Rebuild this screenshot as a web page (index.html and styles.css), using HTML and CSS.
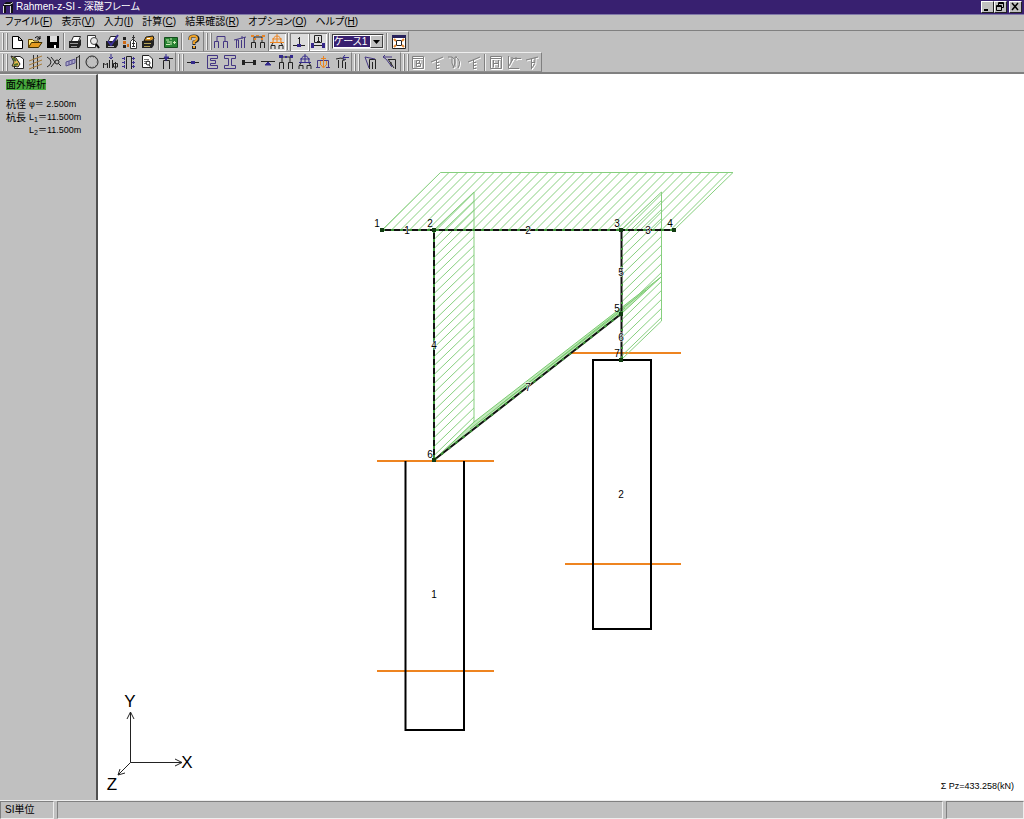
FILE: index.html
```html
<!DOCTYPE html>
<html lang="ja">
<head>
  <meta charset="UTF-8">
  <title>Rahmen-z-SI - 深礎フレーム</title>
  <link rel="stylesheet" href="styles.css">
</head>
<body>
  <header class="titlebar">
    <svg class="app-icon" viewBox="0 0 12 13"><path d="M1 4L4 1H11V12H8V5H4V12H1Z" fill="#111"/><path d="M1.500 5V12M8.500 5V12M2 3.500H8L11 1.500" fill="none" stroke="#ddd"/></svg>
    <h1>Rahmen-z-SI - 深礎フレーム</h1>
    <div class="window-buttons">
      <button aria-label="最小化"><svg viewBox="0 0 10 9"><path d="M2 7H6V9H2Z"/></svg></button>
      <button aria-label="元に戻す"><svg viewBox="0 0 10 9"><path d="M3.500 3V.5H8.500V5.500H6.500M3 1.500H9M1.500 3.500H6.500V8.500H1.500ZM1 4.500H7" fill="none" stroke="#000"/></svg></button>
      <button class="close" aria-label="閉じる"><svg viewBox="0 0 10 9"><path d="M2 1L8 8M8 1L2 8" stroke="#000" stroke-width="1.500"/></svg></button>
    </div>
  </header>

  <nav class="menubar">
    <button>ファイル(<u>F</u>)</button>
    <button>表示(<u>V</u>)</button>
    <button>入力(<u>I</u>)</button>
    <button>計算(<u>C</u>)</button>
    <button>結果確認(<u>R</u>)</button>
    <button>オプション(<u>O</u>)</button>
    <button>ヘルプ(<u>H</u>)</button>
  </nav>

  <div class="toolbars">
    <div class="toolbar-row">
      <div class="band">
        <span class="grip"></span>
        <div class="group g3">
          <button aria-label="新規"><svg viewBox="0 0 16 16"><path d="M3.500 2.500H9.500L13.500 6.500V14.500H3.500ZM9.500 2.500V6.500H13.500" fill="#fff" stroke="#000"/></svg></button>
          <button aria-label="開く"><svg viewBox="0 0 16 16"><path d="M1.500 13.500V5.500H5.500L7 7H11.500V9" fill="#ffe878" stroke="#604000"/><path d="M1.500 13.500L4.500 8.500H15L11.500 13.500Z" fill="#e39a20" stroke="#403000"/><path d="M8 4Q11 1 13 5M13 2V5H10" fill="none" stroke="#000"/></svg></button>
          <button aria-label="保存"><svg viewBox="0 0 16 16"><path d="M2 2H14V14H2Z"/><path d="M5 2H12V8H5Z" fill="#ddd"/><path d="M9 11H11V14H9Z" fill="#fff"/></svg></button>
        </div>
        <span class="sep"></span>
        <div class="group g5">
          <button aria-label="印刷"><svg viewBox="0 0 16 16"><path d="M4.500 7L6.500 2.500H13.500L11.500 7" fill="#fff" stroke="#222"/><path d="M2 7H12L14 5V11L12 14H2Z" fill="#222"/><path d="M3 9.500H11M4 12.500H10" stroke="#999"/></svg></button>
          <button aria-label="印刷プレビュー"><svg viewBox="0 0 16 16"><path d="M2.500 1.500H10.500V13.500H2.500Z" fill="#fff" stroke="#333"/><circle cx="9" cy="7" r="3.500" fill="#e8e8e8" stroke="#444"/><path d="M11 10L14 14" stroke="#000" stroke-width="2"/></svg></button>
          <button aria-label="印刷設定"><svg viewBox="0 0 16 16"><path d="M4.500 7L6.500 2.500H12.500L11.500 7" fill="#fff" stroke="#222"/><path d="M2 7H12L14 5V11L12 14H2Z" fill="#222"/><path d="M4 7L7 11L14 1" fill="none" stroke="#3b2f95" stroke-width="2"/><path d="M4 12.500H10" stroke="#bbb"/></svg></button>
          <button aria-label="データ出力"><svg viewBox="0 0 16 16"><path d="M1 3H4V6H1ZM1 11H4V14H1Z" fill="#222"/><path d="M1 7H4V10H1ZM5 10H7V13H5Z" fill="#d06c18"/><path d="M8.500 14.500V7.500L11 5L14.500 8.500V14.500Z" fill="#fff" stroke="#333"/><path d="M11.500 1V13M10 3.500H13M10 9.500H13M10 12.500H13" stroke="#333"/></svg></button>
          <button aria-label="帳票"><svg viewBox="0 0 16 16"><path d="M2 7H12L14 5V11L12 14H2Z" fill="#222"/><path d="M4 7L6 3L13 2L14 5L11 7Z" fill="#d99623" stroke="#111"/><path d="M4 9.500H11M4 12.500H10" stroke="#b5a458"/><path d="M7 4.500H10" stroke="#fff"/></svg></button>
        </div>
        <span class="sep"></span>
        <div class="group g1">
          <button aria-label="計算実行"><svg viewBox="0 0 16 16"><path d="M1.500 3.500H14.500V13.500H1.500Z" fill="#278332" stroke="#134d1d"/><path d="M3 6H6M7 5H9M4 8H7M8 7V11M3 10.500H7M10 8.500H13M11.500 7V10" stroke="#cdebb7"/></svg></button>
        </div>
        <span class="sep"></span>
        <div class="group g1">
          <button aria-label="ヘルプ"><svg viewBox="0 0 16 16"><path d="M4 6V4Q4 2 8 2Q12 2 12 5Q12 7 8 8V11" fill="none" stroke="#222" stroke-width="3"/><path d="M4 6V4Q4 2 8 2Q11 2 11 5Q11 6 8 8V10" fill="none" stroke="#f0a428" stroke-width="2"/><path d="M6 12H10V15H6Z" fill="#222"/><path d="M7 12H9V14H7Z" fill="#f0a428"/></svg></button>
        </div>
      </div>
      <div class="band">
        <span class="grip"></span>
        <div class="group g4">
          <button aria-label="面内モデル"><svg viewBox="0 0 16 16"><path d="M4 8V2.500H12V8M1.500 14V7.500H5.500V14M10.500 14V7.500H14.500V14" fill="none" stroke="#443783"/></svg></button>
          <button aria-label="面外モデル"><svg viewBox="0 0 16 16"><path d="M2 6L14 3M4.500 14V6H6.500V14M12.500 14V3M9.500 6V14M10 2V5" fill="none" stroke="#443783"/></svg></button>
          <button aria-label="荷重"><svg viewBox="0 0 16 16"><path d="M4 8V3H12V8M1.500 14V8.500H5.500V14M10.500 14V8.500H14.500V14" fill="none" stroke="#222"/><path d="M1 1H4V3H1ZM6 1H9V2H6ZM12 1H15V3H12ZM4 4H6V6H4ZM11 4H13V6H11Z" fill="#e88425"/></svg></button>
          <button class="pressed" aria-label="断面力図"><svg viewBox="0 0 16 16"><path d="M4 8Q4 2 8 2Q12 2 12 8M8 0V9M3 5H13M1 8.500H15" fill="none" stroke="#ed8420"/><path d="M4 9L2 12V15M12 9L14 12V15M2 11.500H6V15M10 15V11.500H14" fill="none" stroke="#222"/></svg></button>
        </div>
        <span class="sep"></span>
        <div class="group g2">
          <button class="pressed" aria-label="節点番号"><svg viewBox="0 0 16 16"><path d="M8.500 3V11M7 4.500H9M2 11.500H14" stroke="#222" fill="none"/><path d="M6 10H10V13H6Z" fill="#36288a"/></svg></button>
          <button class="pressed" aria-label="部材番号"><svg viewBox="0 0 16 16"><path d="M4.500 1.500H11.500V8.500H4.500ZM8.500 3V7M7 7.500H10M2 11.500H14" fill="none" stroke="#222"/><path d="M1 9H4V14H1ZM12 9H15V14H12Z" fill="#36288a"/></svg></button>
        </div>
        <span class="sep"></span>
        <label class="combo">
          <select aria-label="荷重ケース"><option>ケース1</option><option>ケース2</option></select>
          <svg viewBox="0 0 11 11"><path d="M2 4H9L5.500 8Z"/></svg>
        </label>
        <span class="sep"></span>
        <div class="group g1">
          <button aria-label="全体表示"><svg viewBox="0 0 16 16"><path d="M1.500 2.500H14.500V14.500H1.500Z" fill="#fff" stroke="#222"/><path d="M1 1H15V4H1Z" fill="#28225c"/><path d="M5.500 6.500H10.500V11.500H5.500Z" fill="none" stroke="#222"/><path d="M3 5L5 7M13 5L11 7M3 13L5 11M13 13L11 11" stroke="#e6862d" stroke-width="2"/></svg></button>
        </div>
      </div>
    </div>

    <div class="toolbar-row">
      <div class="band">
        <span class="grip"></span>
        <div class="group g9">
          <button aria-label="基本条件"><svg viewBox="0 0 16 16"><path d="M5.500 2.500H11L14.500 5V14.500H5.500Z" fill="#fff" stroke="#222"/><path d="M2 2L7 4L11 10L9 13L3 12L5 8Z" fill="#e8bd50" stroke="#222"/><path d="M4 4L7 7M5 11L9 10" stroke="#4a6f2c" stroke-width="2"/></svg></button>
          <button aria-label="地盤"><svg viewBox="0 0 16 16"><path d="M5.500 1V15M9.500 1V15" stroke="#333"/><path d="M1 7L14 2M1 11L14 6M1 15L14 10" stroke="#a87b38"/></svg></button>
          <button aria-label="すべり面"><svg viewBox="0 0 16 16"><path d="M1 3Q5 5 5 8Q5 11 1 13M5 3L9 8L5 13M15 4L12 7M15 12L12 9" fill="none" stroke="#222"/><circle cx="11" cy="8" r="2" fill="#bbb" stroke="#222"/></svg></button>
          <button aria-label="地層"><svg viewBox="0 0 16 16"><path d="M1 8L10 5V9L1 12ZM4 7V11M7 6V10" fill="#aaa6cb" stroke="#5a528f"/><path d="M11.500 3V15M14.500 1V15M11 4L15 2" stroke="#333"/></svg></button>
          <button aria-label="杭断面"><svg viewBox="0 0 16 16"><circle cx="8" cy="8" r="6" fill="none" stroke="#222"/><circle cx="8" cy="8" r="5" fill="none" stroke="#777" stroke-dasharray="1 2"/></svg></button>
          <button aria-label="M-φ"><svg viewBox="0 0 16 16"><path d="M1.500 14V9L3.500 11L5.500 9V14M13.500 8V15M11.500 9.500H15.500V13H11.500ZM7.500 14V6M10.500 6V14" fill="none" stroke="#222"/><path d="M9 0V5M7 3L9 5L11 3" stroke="#342a8b" fill="none"/></svg></button>
          <button aria-label="地盤ばね"><svg viewBox="0 0 16 16"><path d="M5.500 15V2.500H10.500V15" fill="none" stroke="#222"/><path d="M1 4.500H5M1 8.500H5M1 12.500H5M11 4.500H15M11 8.500H15M11 12.500H15M3.500 3V14M12.500 3V14" stroke="#3b2f92" stroke-dasharray="3 1"/></svg></button>
          <button aria-label="条件確認"><svg viewBox="0 0 16 16"><path d="M3.500 1.500H10L13.500 5V13.500H3.500Z" fill="#fff" stroke="#222"/><path d="M5 5.500H10M5 7.500H11M5 9.500H8" stroke="#777"/><circle cx="9" cy="9" r="2" fill="none" stroke="#222"/><path d="M10 11L13 15" stroke="#222"/></svg></button>
          <button aria-label="杭頭荷重"><svg viewBox="0 0 16 16"><path d="M1 4.500H15M5.500 15V6.500H11.500V15" fill="none" stroke="#222"/><path d="M8 0V7M6 3H11L8 6Z" fill="#342a8b" stroke="#342a8b"/></svg></button>
        </div>
      </div>
      <div class="band">
        <span class="grip"></span>
        <div class="group g9">
          <button aria-label="節点"><svg viewBox="0 0 16 16"><path d="M2 8.500H14" stroke="#222"/><path d="M6 7H10V10H6Z" fill="#342a8b"/></svg></button>
          <button aria-label="部材"><svg viewBox="0 0 16 16"><path d="M3.500 1.500H13.500V4.500H6.500V6.500H11.500V9.500H6.500V11.500H13.500V14.500H3.500Z" fill="none" stroke="#443783"/></svg></button>
          <button aria-label="断面"><svg viewBox="0 0 16 16"><path d="M2.500 1.500H13.500V4.500H9.500V11.500H13.500V14.500H2.500V11.500H6.500V4.500H2.500Z" fill="none" stroke="#443783"/></svg></button>
          <button aria-label="剛域"><svg viewBox="0 0 16 16"><path d="M2 8.500H14" stroke="#222"/><path d="M1 6H4V11H1ZM12 6H15V11H12Z" fill="#222"/></svg></button>
          <button aria-label="支点"><svg viewBox="0 0 16 16"><path d="M1 7.500H15" stroke="#222"/><path d="M8 8L11 11H5Z" fill="#342a8b" stroke="#342a8b"/></svg></button>
          <button aria-label="分布荷重"><svg viewBox="0 0 16 16"><path d="M4 8V3H12V8M1.500 15V8.500H5.500V15M10.500 15V8.500H14.500V15" fill="none" stroke="#222"/><path d="M1 1H5V4H1ZM7 2H9V4H7ZM12 1H15V4H12Z" fill="#342a8b"/></svg></button>
          <button aria-label="集中荷重"><svg viewBox="0 0 16 16"><path d="M4 8Q4 2 8 2Q12 2 12 8M8 0V9M3 5H13M2 8.500H14" fill="none" stroke="#342a8b"/><path d="M4 9L2 12V15M12 9L14 12V15M2 11.500H6V15M10 15V11.500H14" fill="none" stroke="#222"/></svg></button>
          <button aria-label="荷重ケース"><svg viewBox="0 0 16 16"><path d="M2.500 13V6.500H13.500V13M1 13.500H5M11 13.500H15" fill="none" stroke="#443783"/><path d="M8.500 2V13M6 4.500H11M6 11L8.500 14L11 11M5.500 7V11M11.500 7V11" fill="none" stroke="#ed8420"/></svg></button>
          <button aria-label="組合せ"><svg viewBox="0 0 16 16"><path d="M2 5L7 4L11 6M4.500 14V6M8.500 14V7M8 7L12 5M11.500 15V8" fill="none" stroke="#222"/><path d="M15 3.500H9M11 1L9 3.500L11 6" fill="none" stroke="#342a8b"/></svg></button>
        </div>
      </div>
      <div class="band">
        <span class="grip"></span>
        <div class="group g2 wide">
          <button aria-label="面内変位"><svg viewBox="0 0 16 16"><path d="M6.500 15V5.500H12.500V15M9.500 15V8" fill="none" stroke="#222"/><path d="M2 3L12 5M2 3L6 14" fill="none" stroke="#443783"/></svg></button>
          <button aria-label="面外変位"><svg viewBox="0 0 16 16"><path d="M6 5.500H13.500V15M6 5L12 14M9 8V12" fill="none" stroke="#222"/><path d="M1 3H10M3 1L1 3L4 5L10 13" fill="none" stroke="#443783"/></svg></button>
        </div>
      </div>
      <div class="band">
        <span class="grip"></span>
        <div class="group g4">
          <button disabled aria-label="断面力 B"><svg viewBox="0 0 16 16"><path d="M2.500 2.500H13.500V14.500H2.500ZM2 4.500H14M6.500 12.500V6.500H9.500V9.500H6.500H10.500V12.500Z"/></svg></button>
          <button disabled aria-label="杭断面力"><svg viewBox="0 0 16 16"><path d="M2 8L14 3M7.500 6V15M7 8.500H10M7 11.500H10M7 14.500H10"/></svg></button>
          <button disabled aria-label="変位図"><svg viewBox="0 0 16 16"><path d="M1 3H5V9L7 14M5 3Q9 5 8 9L6 14M9 3Q15 7 11 14M10 3H8V13"/></svg></button>
          <button disabled aria-label="反力図"><svg viewBox="0 0 16 16"><path d="M2 8L14 3M7.500 6V15M7 8.500H10M7 11.500H10M7 14.500H10"/></svg></button>
        </div>
        <span class="sep"></span>
        <div class="group g3">
          <button disabled aria-label="断面力 H"><svg viewBox="0 0 16 16"><path d="M2.500 2.500H13.500V14.500H2.500ZM2 4.500H14M5.500 6V13M10.500 6V13M5 9.500H11"/></svg></button>
          <button disabled aria-label="荷重変位"><svg viewBox="0 0 16 16"><path d="M2.500 2V14.500H13M3 12L7 4.500H15M6 3V7M10 3V6"/></svg></button>
          <button disabled aria-label="水平震度"><svg viewBox="0 0 16 16"><path d="M2 6L14 3M7.500 5V15M11 4Q12 10 8 14M7 8.500H11"/></svg></button>
        </div>
      </div>
    </div>
  </div>

  <main class="workspace">
    <aside class="sidebar">
      <h2>面外解析</h2>
      <div class="param"><span>杭径</span><span class="value">φ＝ 2.500m</span></div>
      <div class="param"><span>杭長</span><span class="value">L<sub>1</sub>＝11.500m</span></div>
      <div class="param"><span></span><span class="value">L<sub>2</sub>＝11.500m</span></div>
    </aside>

    <svg class="drawing" viewBox="98 74 926 726">
      <defs>
        <pattern id="beamHatch" width="9" height="58" patternUnits="userSpaceOnUse" patternTransform="translate(382 230) skewX(-45)">
          <path d="M0 0H1V58H0Z" class="hatch"/>
        </pattern>
        <pattern id="leftHatch" width="40" height="9" patternUnits="userSpaceOnUse" patternTransform="translate(434 230) skewY(-44)">
          <path d="M0 0H40V1H0Z" class="hatch"/>
        </pattern>
        <pattern id="rightHatch" width="40" height="9" patternUnits="userSpaceOnUse" patternTransform="translate(621 230) skewY(-44)">
          <path d="M0 0H40V1H0Z" class="hatch"/>
        </pattern>
      </defs>

      <!-- ground lines -->
      <path class="ground" d="M377 461H494M377 671H494M565 353H681M565 564H681"/>

      <!-- force diagrams -->
      <path class="force" fill="url(#beamHatch)" d="M382 230L440.500 172.500H733L674 230"/>
      <path class="force" fill="url(#leftHatch)" d="M434 230L474 192V422L434 460"/>
      <path class="force" fill="url(#rightHatch)" d="M621 230L661.500 192V321L621 360"/>
      <path class="brace-force" d="M434 460L474 422L661 277L621 314Z"/>
      <path class="brace-lines" d="M448 449L615 318M470 429L646 290M500 405L625 308"/>

      <!-- piles -->
      <path class="pile" d="M405.500 461V730H464V461M593 360H651V629H593Z"/>

      <!-- frame -->
      <path class="member" d="M382 230H674M434 230V460M621.500 230V360M434 460L621 314"/>
      <path class="ticks" d="M382 230H674M434 230V460M434 460L621 314"/>
      <path class="ticks sparse" d="M622 230V360"/>
      <path class="node" d="M380 228H384V232H380ZM432 228H436V232H432ZM619 228H623V232H619ZM672 228H676V232H672ZM619 312H623V316H619ZM619 358H623V362H619ZM432 458H436V462H432Z"/>

      <g class="label">
        <text x="377" y="227">1</text>
        <text x="430" y="227">2</text>
        <text x="617" y="227">3</text>
        <text x="670" y="227">4</text>
        <text x="617" y="312">5</text>
        <text x="430" y="458">6</text>
        <text x="617" y="357">7</text>
        <text x="434" y="598">1</text>
        <text x="621" y="498">2</text>
      </g>
      <g class="label on-member">
        <text x="407" y="234">1</text>
        <text x="528" y="234">2</text>
        <text x="648" y="234">3</text>
        <text x="434" y="349">4</text>
        <text x="621" y="276">5</text>
        <text x="621" y="341">6</text>
        <text x="528" y="391">7</text>
      </g>

      <!-- axes -->
      <path class="axis" d="M130.500 712V762.500H182M130.500 762.500L118 775M127 719L130.500 712L134 719M175 759L182 762.500L175 766M120 769L118 775L125 773"/>
      <g class="axis-name">
        <text x="130" y="707">Y</text>
        <text x="187" y="768">X</text>
        <text x="112" y="790">Z</text>
      </g>
      <text class="total" x="1014" y="789">Σ Pz=433.258(kN)</text>
    </svg>
  </main>

  <footer class="statusbar">
    <span class="unit">SI単位</span>
    <span class="message"></span>
    <span class="extra"></span>
  </footer>
</body>
</html>
```

FILE: styles.css
```css
* {
  box-sizing: border-box;
}
body {
  margin: 0;
  min-height: 100vh;
  display: flex;
  flex-direction: column;
  background: #c0c0c0;
  color: #000;
  font-family: "Liberation Sans", "Noto Sans CJK JP", sans-serif;
  font-size: 10px;
  font-feature-settings: "palt";
}
button {
  font: inherit;
  color: inherit;
  padding: 0;
  border: 0;
  background: none;
}
h1, h2 {
  margin: 0;
  font-size: 10px;
  font-weight: normal;
}

/* title bar */
.titlebar {
  display: flex;
  align-items: center;
  height: 14px;
  padding: 0 2px;
  background: #382070;
  color: #fff;
}
.titlebar h1 {
  flex: 1;
  padding-left: 2px;
  line-height: 14px;
}
.app-icon {
  width: 12px;
  height: 13px;
}
.window-buttons {
  display: flex;
}
.window-buttons button {
  display: flex;
  width: 13px;
  height: 12px;
  background: #c0c0c0;
  border: 1px solid;
  border-color: #fff #222 #222 #fff;
}
.window-buttons svg {
  width: 10px;
  height: 9px;
}
.window-buttons .close {
  margin-left: 2px;
}

/* menu */
.menubar {
  display: flex;
  gap: 9px;
  height: 17px;
  padding: 0 5px;
  border-top: 1px solid #8078a8;
  border-bottom: 1px solid #808080;
}
.menubar button {
  line-height: 12px;
  padding-bottom: 2px;
  white-space: nowrap;
}

/* toolbars */
.toolbars {
  border-bottom: 2px solid #808080;
}
.toolbar-row {
  display: flex;
  height: 21px;
}
.toolbar-row + .toolbar-row {
  height: 20px;
}
.band {
  display: flex;
  align-items: center;
  padding-left: 2px;
  border: 1px solid;
  border-color: #eee #808080 #909090 #eee;
  border-left-width: 0;
}
.grip {
  width: 5px;
  height: 17px;
  margin-right: 1px;
  border: solid #eee;
  border-width: 0 1px;
  box-shadow: 1px 0 #808080, inset 1px 0 #808080;
}
.group {
  display: flex;
}
.g1 { width: 19px; }
.g2 { width: 37px; }
.g3 { width: 54px; }
.g4 { width: 74px; }
.g5 { width: 91px; }
.g9 { width: 167px; }
.wide {
  width: 38px;
  margin: 0 1px;
}
.group button {
  flex: 1;
  display: flex;
  align-items: center;
  justify-content: center;
  height: 18px;
}
.group svg {
  width: 16px;
  height: 16px;
}
.pressed {
  background: #dcdcdc;
  box-shadow: inset 1px 1px #808080, inset -1px -1px #fff;
}
.group button:disabled svg {
  fill: none;
  stroke: #808080;
  filter: drop-shadow(1px 1px 0 #fff);
}
.sep {
  width: 2px;
  height: 17px;
  margin: 0 1px;
  border-left: 1px solid #808080;
  border-right: 1px solid #eee;
}
.combo {
  position: relative;
  display: flex;
  width: 52px;
  height: 15px;
  margin: 0 1px;
  padding: 1px;
  background: #fff;
  border: 1px solid;
  border-color: #404040 #eee #eee #404040;
}
.combo select {
  appearance: none;
  width: 100%;
  padding: 0 12px 0 0;
  border: 0;
  border-radius: 0;
  background: #382070;
  color: #fff;
  font: inherit;
  line-height: 11px;
}
.combo svg {
  position: absolute;
  top: 0;
  right: 0;
  width: 13px;
  height: 13px;
  background: #c0c0c0;
  border: 1px solid;
  border-color: #fff #404040 #404040 #fff;
  pointer-events: none;
}

/* workspace */
.workspace {
  flex: 1;
  display: flex;
  border-bottom: 1px solid #eee;
}
.sidebar {
  width: 98px;
  padding: 4px 6px;
  border-top: 1px solid #eee;
  border-right: 2px solid #505050;
}
.sidebar h2 {
  width: max-content;
  margin-bottom: 8px;
  background: #46a83c;
  line-height: 11px;
}
.param {
  display: grid;
  grid-template-columns: 20px 1fr;
  gap: 3px;
  height: 13px;
  line-height: 13px;
  white-space: nowrap;
}
.value {
  font-size: 9px;
}
sub {
  font-size: 7px;
  line-height: 1;
  vertical-align: -2px;
}

/* structure drawing */
.drawing {
  flex: 1;
  min-width: 0;
  background: #fff;
}
.hatch {
  fill: #86cf7e;
}
.force {
  stroke: #86cf7e;
}
.brace-force {
  fill: #c2e8bc;
  stroke: #7acb70;
}
.brace-lines {
  stroke: #7acb70;
}
.ground {
  stroke: #ee8420;
  stroke-width: 2;
}
.pile {
  fill: none;
  stroke: #000;
  stroke-width: 2;
}
.member {
  fill: none;
  stroke: #111;
  stroke-width: 2;
}
.ticks {
  fill: none;
  stroke: #3d9238;
  stroke-width: 2;
  stroke-dasharray: 3 6;
}
.sparse {
  stroke-dasharray: 2 7;
}
.node {
  fill: #123c12;
}
.label {
  font-size: 10px;
  text-anchor: middle;
}
.on-member {
  paint-order: stroke;
  stroke: #fff;
  stroke-width: 1px;
}
.axis {
  fill: none;
  stroke: #222;
}
.axis-name {
  font-size: 17px;
  text-anchor: middle;
}
.total {
  font-size: 9px;
  text-anchor: end;
}

/* status bar */
.statusbar {
  display: flex;
  gap: 3px;
  height: 18px;
}
.statusbar span {
  border: 1px solid;
  border-color: #808080 #eee #eee #808080;
  line-height: 16px;
}
.unit {
  width: 54px;
  padding-left: 4px;
}
.message {
  flex: 1;
}
.extra {
  width: 78px;
}
```
